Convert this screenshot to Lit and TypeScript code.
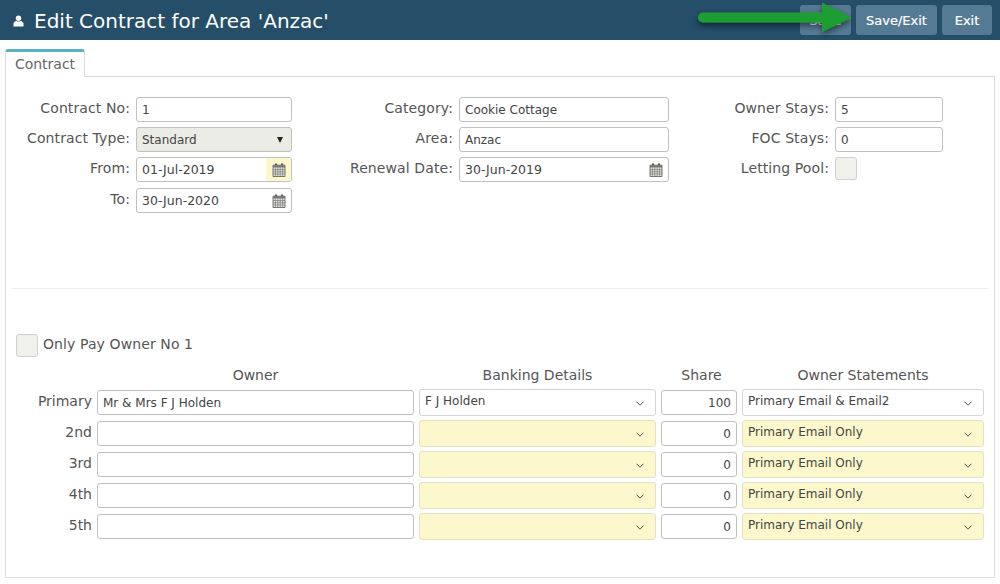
import { LitElement, html, css, svg } from "lit";
import { customElement } from "lit/decorators.js";

const calendar = html`<svg class="cal" viewBox="0 0 14 14" width="14" height="14" aria-hidden="true">
  <path d="M3 .5h2v2.4H3zM9 .5h2v2.4H9z" fill="#555"/>
  <path d="M1 2.2h12v11.3H1z" fill="#e8e8e0" stroke="#555" stroke-width=".8"/>
  <path d="M1 2.2h12v2.2H1z" fill="#777"/>
  <path d="M1 6.6h12M1 8.8h12M1 11h12M3.4 4.4v9M5.8 4.4v9M8.2 4.4v9M10.6 4.4v9" stroke="#666" stroke-width=".6" fill="none"/>
</svg>`;

const chevron = svg`<svg class="chev" viewBox="0 0 8 5" width="8" height="5" aria-hidden="true"><path d="M.5.7L4 4.2 7.5.7" fill="none" stroke="#555" stroke-width="1"/></svg>`;

const rows = [
  { label: "Primary", owner: "Mr & Mrs F J Holden", bank: "F J Holden", share: "100", st: "Primary Email & Email2", warn: false },
  { label: "2nd", owner: "", bank: "", share: "0", st: "Primary Email Only", warn: true },
  { label: "3rd", owner: "", bank: "", share: "0", st: "Primary Email Only", warn: true },
  { label: "4th", owner: "", bank: "", share: "0", st: "Primary Email Only", warn: true },
  { label: "5th", owner: "", bank: "", share: "0", st: "Primary Email Only", warn: true },
];

@customElement("app-root")
export class AppRoot extends LitElement {
  static styles = css`
    :host {
      display: block;
      position: relative;
      width: 1000px;
      height: 584px;
      overflow: hidden;
      background: #fff;
      font-family: "DejaVu Sans", sans-serif;
      color: #555;
    }
    .header {
      height: 40px;
      box-sizing: border-box;
      background: #254e68;
      display: flex;
      align-items: center;
      padding: 0 8px 0 13px;
      gap: 5px;
    }
    .title {
      flex: 1;
      display: flex;
      align-items: center;
      gap: 10px;
      color: #fff;
      font-size: 20px;
      line-height: 38px;
      margin-top: 2px;
    }
    .btn {
      height: 30px;
      box-sizing: border-box;
      border-radius: 3px;
      background: #557a93;
      color: #fff;
      font-size: 13px;
      display: flex;
      align-items: center;
      justify-content: center;
      -webkit-text-stroke: 0.2px #fff;
    }
    .b1 { width: 51px; }
    .b2 { width: 81px; }
    .b3 { width: 50px; }
    .arrow {
      position: absolute;
      left: 690px;
      top: 0;
    }
    .tabs {
      padding: 9px 0 0 5px;
      height: 27px;
    }
    .tab {
      width: 80px;
      height: 28px;
      box-sizing: border-box;
      background: #fff;
      border: 1px solid #dcdcdc;
      border-top: 3px solid #57b3bf;
      border-bottom: 0;
      border-radius: 3px 3px 0 0;
      font-size: 14px;
      color: #666;
      text-align: center;
      line-height: 24px;
      position: relative;
      z-index: 1;
    }
    .panel {
      margin: 0 5px;
      height: 502px;
      box-sizing: border-box;
      border: 1px solid #dcdcdc;
      padding: 20px 6px 0 6px;
    }
    .top {
      display: grid;
      grid-template-columns: 118px 156px 155px 210px 154px 108px;
      grid-template-rows: 25px 25px 25px 25px;
      row-gap: 5px;
      column-gap: 6px;
      height: 191px;
      align-items: start;
    }
    .top .r4 { margin-top: 1px; }
    .lab {
      font-size: 14px;
      color: #555;
      text-align: right;
      line-height: 23px;
      white-space: nowrap;
      letter-spacing: 0.1px;
    }
    .field {
      height: 25px;
      box-sizing: border-box;
      border: 1px solid #c0c0c0;
      border-radius: 3px;
      background: #fff;
      font-size: 12px;
      color: #444;
      padding: 0 5px;
      line-height: 24px;
      display: flex;
      align-items: center;
      justify-content: space-between;
      white-space: nowrap;
      overflow: hidden;
    }
    .date { padding-right: 0; font-size: 12.5px; }
    .iconbox {
      width: 25px;
      height: 100%;
      display: flex;
      align-items: center;
      justify-content: center;
      flex: none;
    }
    .iconbox.warn { background: #fcf8cc; }
    .cal { display: block; }
    .grey {
      background: #ecece6;
      padding: 0 8px 0 5px;
    }
    .tri {
      width: 0;
      height: 0;
      border-left: 3.5px solid transparent;
      border-right: 3.5px solid transparent;
      border-top: 6px solid #222;
    }
    .check {
      width: 22px;
      height: 23px;
      box-sizing: border-box;
      border: 1px solid #d0d0cc;
      border-radius: 3px;
      background: #f1f1ec;
    }
    .divider {
      height: 1px;
      background: #ececec;
      margin-bottom: 45px;
    }
    .only {
      display: flex;
      align-items: center;
      gap: 5px;
      height: 23px;
      margin-left: 4px;
      font-size: 14px;
      color: #555;
      line-height: 19px;
      letter-spacing: 0.1px;
    }
    .only span { position: relative; top: -1px; }
    .owners {
      display: grid;
      grid-template-columns: 80px 317px 237px 76px 242px;
      grid-template-rows: 18px repeat(5, 25px);
      column-gap: 5px;
      row-gap: 6px;
      margin-top: 9px;
      align-items: start;
    }
    .owners .lab { padding-right: 0; line-height: 22px; letter-spacing: 0; }
    .head {
      font-size: 14px;
      color: #555;
      text-align: center;
      line-height: 18px;
      height: 18px;
    }
    .head.sh { padding-left: 5px; }
    .owner { padding-top: 1px; }
    .sel {
      padding: 1px 11px 0 5px;
      height: 27px;
      margin-top: -1px;
      line-height: 20px;
      align-items: flex-start;
      border-color: #d4d4d4;
    }
    .sel.warn { background: #fcf8cc; border-color: #e4e2c4; }
    .sel .chev { align-self: center; flex: none; }
    .share { justify-content: flex-end; padding-top: 0; }
  `;

  private label(t: string, cls = "") {
    return html`<div class="lab ${cls}">${t}</div>`;
  }

  private dateField(v: string, warn = false) {
    return html`<div class="field date">${v}<span class="iconbox ${warn ? "warn" : ""}">${calendar}</span></div>`;
  }

  render() {
    return html`
      <div class="header">
        <div class="title">
          <svg viewBox="0 0 12 13" width="11" height="12" aria-hidden="true">
            <circle cx="6" cy="3.4" r="3" fill="#fff"/>
            <path d="M.5 12.5V9.6C.5 7.8 2 6.6 3.6 6.4c1.4 1 3.4 1 4.8 0 1.6.2 3.1 1.4 3.1 3.2v2.9z" fill="#fff"/>
          </svg>
          <span>Edit Contract for Area 'Anzac'</span>
        </div>
        <div class="btn b1">Save</div>
        <div class="btn b2">Save/Exit</div>
        <div class="btn b3">Exit</div>
      </div>
      <svg class="arrow" width="170" height="40" viewBox="0 0 170 40" aria-hidden="true">
        <defs>
          <filter id="s" x="-10%" y="-40%" width="120%" height="200%">
            <feDropShadow dx="0" dy="3" stdDeviation="3" flood-color="#000" flood-opacity=".55"/>
          </filter>
        </defs>
        <path filter="url(#s)" fill="#1f9e32"
          d="M13 12.5H132V2.5L162 17.5 132 32V22.5H13a5 5 0 0 1 0-10z"/>
      </svg>
      <div class="tabs"><div class="tab">Contract</div></div>
      <div class="panel">
        <div class="top">
          ${this.label("Contract No:")}
          <div class="field">1</div>
          ${this.label("Category:")}
          <div class="field">Cookie Cottage</div>
          ${this.label("Owner Stays:")}
          <div class="field">5</div>

          ${this.label("Contract Type:")}
          <div class="field grey">Standard<span class="tri"></span></div>
          ${this.label("Area:")}
          <div class="field">Anzac</div>
          ${this.label("FOC Stays:")}
          <div class="field">0</div>

          ${this.label("From:")}
          ${this.dateField("01-Jul-2019", true)}
          ${this.label("Renewal Date:")}
          ${this.dateField("30-Jun-2019")}
          ${this.label("Letting Pool:")}
          <div class="check"></div>

          ${this.label("To:", "r4")}
          <div class="r4">${this.dateField("30-Jun-2020")}</div>
        </div>
        <div class="divider"></div>
        <div class="only"><div class="check"></div><span>Only Pay Owner No 1</span></div>
        <div class="owners">
          <div></div>
          <div class="head">Owner</div>
          <div class="head">Banking Details</div>
          <div class="head sh">Share</div>
          <div class="head">Owner Statements</div>
          ${rows.map(
            (r) => html`
              ${this.label(r.label)}
              <div class="field owner">${r.owner}</div>
              <div class="field sel ${r.warn ? "warn" : ""}"><span>${r.bank}</span>${chevron}</div>
              <div class="field share">${r.share}</div>
              <div class="field sel ${r.warn ? "warn" : ""}"><span>${r.st}</span>${chevron}</div>
            `
          )}
        </div>
      </div>
    `;
  }
}
